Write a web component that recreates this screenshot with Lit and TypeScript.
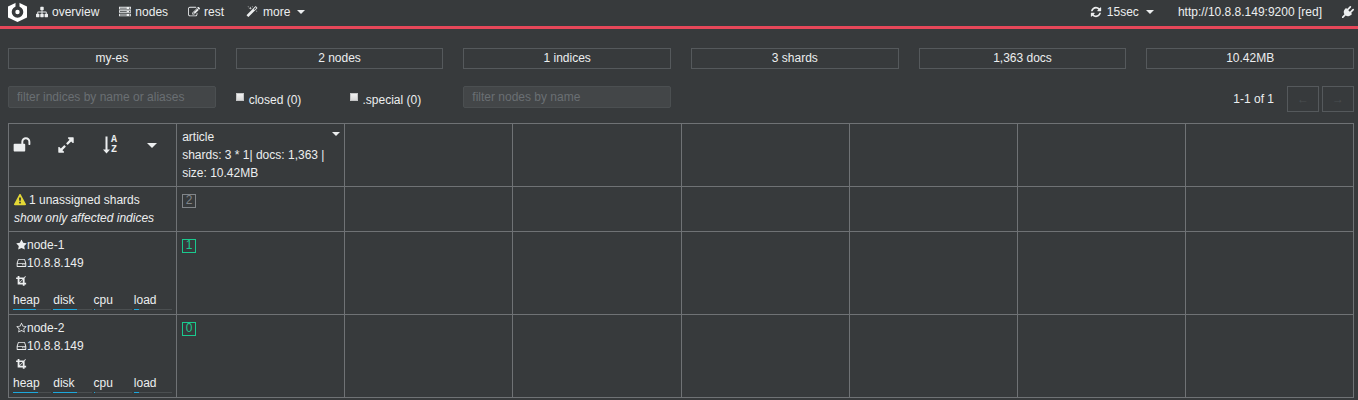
import { LitElement, html, css, svg } from "lit";
import { customElement, property, state } from "lit/decorators.js";

const GLYPHS: Record<string, string> = {
  sitemap:
    "M1792 1248v320q0 40-28 68t-68 28h-320q-40 0-68-28t-28-68v-320q0-40 28-68t68-28h96v-192h-512v192h96q40 0 68 28t28 68v320q0 40-28 68t-68 28h-320q-40 0-68-28t-28-68v-320q0-40 28-68t68-28h96v-192h-512v192h96q40 0 68 28t28 68v320q0 40-28 68t-68 28h-320q-40 0-68-28t-28-68v-320q0-40 28-68t68-28h96v-192q0-52 38-90t90-38h512v-192h-96q-40 0-68-28t-28-68v-320q0-40 28-68t68-28h320q40 0 68 28t28 68v320q0 40-28 68t-68 28h-96v192h512q52 0 90 38t38 90v192h96q40 0 68 28t28 68z",
  server:
    "M128 1408h1024v-128h-1024v128zm0-512h1024v-128h-1024v128zm1568 448q0-40-28-68t-68-28-68 28-28 68 28 68 68 28 68-28 28-68zm-1568-960h1024v-128h-1024v128zm1568 448q0-40-28-68t-68-28-68 28-28 68 28 68 68 28 68-28 28-68zm0-512q0-40-28-68t-68-28-68 28-28 68 28 68 68 28 68-28 28-68zm96 832v384h-1792v-384h1792zm0-512v384h-1792v-384h1792zm0-512v384h-1792v-384h1792z",
  edit:
    "M888 1184l116-116-152-152-116 116v56h96v96h56zm440-720q-16-16-33 1l-350 350q-17 17-1 33t33-1l350-350q17-17 1-33zm80 594v190q0 119-84.5 203.5t-203.5 84.5h-832q-119 0-203.5-84.5t-84.5-203.5v-832q0-119 84.5-203.5t203.5-84.5h832q63 0 117 25 15 7 18 23 3 17-9 29l-49 49q-14 14-32 8-23-6-45-6h-832q-66 0-113 47t-47 113v832q0 66 47 113t113 47h832q66 0 113-47t47-113v-126q0-13 9-22l64-64q15-15 35-7t20 29zm-96-738l288 288-672 672h-288v-288zm444 132l-92 92-288-288 92-92q28-28 68-28t68 28l152 152q28 28 28 68t-28 68z",
  magic:
    "M1254 581l293-293-107-107-293 293zm447-293q0 27-18 45l-1286 1286q-18 18-45 18t-45-18l-198-198q-18-18-18-45t18-45l1286-1286q18-18 45-18t45 18l198 198q18 18 18 45zm-1351-190l98 30-98 30-30 98-30-98-98-30 98-30 30-98zm350 162l196 60-196 60-60 196-60-196-196-60 196-60 60-196zm930 478l98 30-98 30-30 98-30-98-98-30 98-30 30-98zm-640-640l98 30-98 30-30 98-30-98-98-30 98-30 30-98z",
  refresh:
    "M1639 1056q0 5-1 7-64 268-268 434.5t-478 166.5q-146 0-282.5-55t-243.5-157l-129 129q-19 19-45 19t-45-19-19-45v-448q0-26 19-45t45-19h448q26 0 45 19t19 45-19 45l-137 137q71 66 161 102t187 36q134 0 250-65t186-179q11-17 53-117 8-23 30-23h192q13 0 22.5 9.5t9.5 22.5zm25-800v448q0 26-19 45t-45 19h-448q-26 0-45-19t-19-45 19-45l138-138q-148-137-349-137-134 0-250 65t-186 179q-11 17-53 117-8 23-30 23h-199q-13 0-22.5-9.5t-9.5-22.5v-7q65-268 270-434.5t480-166.5q146 0 284 55.5t245 156.5l130-129q19-19 45-19t45 19 19 45z",
  plug:
    "M1755 453q37 38 37 90.5t-37 90.5l-401 400 150 150-160 160q-163 163-389.5 186.5t-411.5-100.5l-362 362h-181v-181l362-362q-124-185-100.5-411.5t186.5-389.5l160-160 150 150 400-401q38-37 91-37t90 37 37 90.5-37 90.5l-400 401 234 234 401-400q38-37 91-37t90 37z",
  expand:
    "M883 1056q0 13-10 23l-332 332 144 144q19 19 19 45t-19 45-45 19h-448q-26 0-45-19t-19-45v-448q0-26 19-45t45-19 45 19l144 144 332-332q10-10 23-10t23 10l114 114q10 10 10 23zm781-864v448q0 26-19 45t-45 19-45-19l-144-144-332 332q-10 10-23 10t-23-10l-114-114q-10-10-10-23t10-23l332-332-144-144q-19-19-19-45t19-45 45-19h448q26 0 45 19t19 45z",
  unlock:
    "M1728 576v256q0 26-19 45t-45 19h-64q-26 0-45-19t-19-45v-256q0-106-75-181t-181-75-181 75-75 181v192h96q40 0 68 28t28 68v576q0 40-28 68t-68 28h-960q-40 0-68-28t-28-68v-576q0-40 28-68t68-28h672v-192q0-185 131.5-316.5t316.5-131.5 316.5 131.5 131.5 316.5z",
  star:
    "M1728 647q0 22-26 48l-363 354 86 500q1 7 1 20 0 21-10.5 35.5t-30.5 14.5q-19 0-40-12l-449-236-449 236q-22 12-40 12-21 0-31.5-14.5t-10.5-35.5q0-6 2-20l86-500-364-354q-25-27-25-48 0-37 56-46l502-73 225-455q19-41 49-41t49 41l225 455 502 73q56 9 56 46z",
  starOutline:
    "M1201 1004l306-297-422-62-189-382-189 382-422 62 306 297-73 421 378-199 377 199zm527-357q0 22-26 48l-363 354 86 500q1 7 1 20 0 50-41 50-19 0-40-12l-449-236-449 236q-22 12-40 12-21 0-31.5-14.5t-10.5-35.5q0-6 2-20l86-500-364-354q-25-27-25-48 0-37 56-46l502-73 225-455q19-41 49-41t49 41l225 455 502 73q56 9 56 46z",
  disk:
    "M420 230h940q84 0 112 84l190 596q8 24 8 64v460q0 96-96 96h-1368q-96 0-96-96v-460q0-40 8-64l190-596q28-84 112-84zm20 150l-160 496h1220l-160-496zm-170 640v360h1240v-360zm740 90h150v170h-150zm240 0h150v170h-150z",
  crop:
    "M270 80h290v230h740l210-210 100 100-210 210v760h250v280h-250v240h-290v-240h-840v-860h-250v-280h250zm290 510v520l520-520zm550 110l-480 480h480z",
  warning:
    "M1024 1375v-190q0-14-9.5-23.5t-22.5-9.5h-192q-13 0-22.5 9.5t-9.5 23.5v190q0 14 9.5 23.5t22.5 9.5h192q13 0 22.5-9.5t9.5-23.5zm-2-374l18-459q0-12-10-19-13-11-24-11h-220q-11 0-24 11-10 7-10 21l17 457q0 10 10 16.5t24 6.5h185q14 0 23.5-6.5t10.5-16.5zm-14-934l768 1408q35 63-2 126-17 29-46.5 46t-63.5 17h-1536q-34 0-63.5-17t-46.5-46q-37-63-2-126l768-1408q17-31 47-49t65-18 65 18 47 49z",
};

@customElement("fa-icon")
export class FaIcon extends LitElement {
  @property() name = "";

  static styles = css`
    :host {
      display: inline-flex;
      flex: none;
      width: 12px;
      height: 12px;
    }
    .glyph {
      width: 100%;
      height: 100%;
      fill: currentColor;
      overflow: visible;
    }
  `;

  render() {
    return html`<svg class="glyph" viewBox="0 0 1792 1792" aria-hidden="true">
      ${svg`<path fill-rule="evenodd" d=${GLYPHS[this.name] ?? ""}></path>`}
    </svg>`;
  }
}

interface ClusterNode {
  name: string;
  host: string;
  master: boolean;
  shard: number;
  usage: { label: string; percent: number }[];
}

const NODES: ClusterNode[] = [
  {
    name: "node-1",
    host: "10.8.8.149",
    master: true,
    shard: 1,
    usage: [
      { label: "heap", percent: 60 },
      { label: "disk", percent: 63 },
      { label: "cpu", percent: 5 },
      { label: "load", percent: 13 },
    ],
  },
  {
    name: "node-2",
    host: "10.8.8.149",
    master: false,
    shard: 0,
    usage: [
      { label: "heap", percent: 66 },
      { label: "disk", percent: 63 },
      { label: "cpu", percent: 5 },
      { label: "load", percent: 13 },
    ],
  },
];

const STATS = ["my-es", "2 nodes", "1 indices", "3 shards", "1,363 docs", "10.42MB"];
const SPARE_COLUMNS = [0, 1, 2, 3, 4, 5];

@customElement("app-root")
export class AppRoot extends LitElement {
  @state() private closed = false;
  @state() private special = false;

  static styles = css`
    :host {
      display: block;
      box-sizing: border-box;
      min-height: 100vh;
      background: #373a3c;
      color: #eceeef;
      font: 12px/18px "Liberation Sans", Arial, sans-serif;
    }
    *,
    *::before {
      box-sizing: border-box;
    }
    button {
      display: inline-flex;
      align-items: center;
      margin: 0;
      padding: 0;
      border: 0;
      background: none;
      color: inherit;
      font: inherit;
      cursor: pointer;
    }
    a {
      color: inherit;
      text-decoration: none;
    }
    .navbar {
      display: flex;
      align-items: center;
      justify-content: space-between;
      height: 29px;
      padding: 0 4px 2px 8px;
      border-bottom: 3px solid #e64759;
    }
    .group {
      display: flex;
      align-items: center;
      gap: 20px;
    }
    .brand {
      display: flex;
      margin-right: -11px;
    }
    .logo {
      width: 19px;
      height: 20px;
    }
    .link {
      display: flex;
      align-items: center;
      gap: 4px;
    }
    .link.wide {
      gap: 5px;
      padding: 0 4px 0 2px;
    }
    .caret {
      flex: none;
      width: 0;
      height: 0;
      border: 4px solid transparent;
      border-top-color: currentColor;
      border-bottom: 0;
    }
    .caret.large {
      margin-left: 2px;
      border-width: 5px;
      border-bottom: 0;
    }
    .caret.spaced {
      margin-left: 2px;
    }
    .page {
      padding: 19px 4px 0 8px;
    }
    .stats {
      display: grid;
      grid-template-columns: repeat(6, 1fr);
      gap: 20px;
    }
    .stat {
      height: 21px;
      border: 1px solid #55595c;
      text-align: center;
    }
    .filters {
      display: grid;
      grid-template-columns: repeat(12, 1fr);
      column-gap: 20px;
      align-items: start;
      margin: 17px 0 11px;
    }
    .filter {
      grid-column: span 2;
      width: 100%;
      height: 22px;
      padding: 0 8px;
      border: 1px solid #4b4f51;
      border-radius: 2px;
      background: #434648;
      color: inherit;
      font: inherit;
      outline: 0;
    }
    .filter::placeholder {
      color: #6a6f73;
      opacity: 1;
    }
    .toggle {
      display: flex;
      gap: 5px;
      padding-top: 5px;
      white-space: nowrap;
    }
    .tick {
      appearance: none;
      flex: none;
      width: 8px;
      height: 8px;
      margin: 2px 0 0;
      border: 1px solid #c4c5c6;
      background: linear-gradient(#f2f2f2, #d8d8d8);
    }
    .tick:checked {
      background: #1ac98e;
    }
    .pager {
      grid-column: 7 / -1;
      display: flex;
      align-items: center;
      justify-content: flex-end;
      gap: 3px;
    }
    .range {
      margin-right: 10px;
    }
    .step {
      justify-content: center;
      width: 32px;
      height: 26px;
      border: 1px solid #55595c;
      color: #4a4e51;
      cursor: default;
    }
    .shards {
      width: 100%;
      border-collapse: collapse;
      table-layout: fixed;
    }
    .cell {
      padding: 4px;
      border: 1px solid #6f7275;
      text-align: left;
      vertical-align: top;
      font-weight: normal;
    }
    .tools {
      display: flex;
      align-items: center;
      gap: 26px;
      height: 34px;
    }
    .tool {
      width: 18px;
      height: 18px;
    }
    .tool fa-icon {
      width: 18px;
      height: 18px;
    }
    .sort {
      gap: 1px;
      padding-left: 2px;
    }
    .arrow {
      flex: none;
      width: 7px;
      height: 18px;
      fill: currentColor;
    }
    .letters {
      display: grid;
      font: bold 10px/10px "Liberation Mono", monospace;
    }
    .index {
      display: flex;
      justify-content: space-between;
      padding-left: 1px;
    }
    .menu {
      align-self: flex-start;
      padding-top: 4px;
    }
    .note {
      padding-left: 1px;
    }
    .alert {
      display: flex;
      align-items: center;
      gap: 3px;
    }
    .alert fa-icon {
      color: #e4d836;
    }
    .shard {
      width: 14px;
      height: 14px;
      margin: 3px 1px 0;
      border: 1px solid #1ac98e;
      color: #1ac98e;
      line-height: 10px;
      text-align: center;
    }
    .shard.unassigned {
      border-color: #818589;
      color: #818589;
    }
    .line {
      display: flex;
      align-items: center;
      height: 18px;
      padding-left: 3px;
    }
    .line fa-icon {
      width: 11px;
    }
    .usage {
      display: grid;
      grid-template-columns: repeat(4, 1fr);
      gap: 2px;
      margin-top: 1px;
    }
    .track {
      height: 1px;
      background: #4b4f51;
    }
    .fill {
      height: 1px;
      background: #1ca8dd;
    }
  `;

  private renderNode(node: ClusterNode) {
    return html`<tr>
      <th class="cell" scope="row">
        <div class="line">
          <fa-icon name=${node.master ? "star" : "starOutline"}></fa-icon>${node.name}
        </div>
        <div class="line"><fa-icon name="disk"></fa-icon>${node.host}</div>
        <div class="line"><fa-icon name="crop"></fa-icon></div>
        <div class="usage">
          ${node.usage.map(
            (u) => html`<div>
              ${u.label}
              <div class="track"><div class="fill" style="width:${u.percent}%"></div></div>
            </div>`
          )}
        </div>
      </th>
      <td class="cell"><div class="shard">${node.shard}</div></td>
      ${SPARE_COLUMNS.map(() => html`<td class="cell"></td>`)}
    </tr>`;
  }

  render() {
    return html`
      <nav class="navbar">
        <div class="group">
          <a class="brand" href="#" aria-label="home">
            <svg class="logo" viewBox="0 0 19 20" aria-hidden="true">
              <path d="M9.5 0l9.5 4.5v11l-9.5 4.5-9.5-4.5v-11z" fill="#fff" />
              <circle cx="9.5" cy="10" r="4" fill="none" stroke="#373a3c" stroke-width="3.6" />
              <path d="M7.5 0h4v6h-4z" fill="#373a3c" />
            </svg>
          </a>
          <a class="link" href="#overview"><fa-icon name="sitemap"></fa-icon>overview</a>
          <a class="link" href="#nodes"><fa-icon name="server"></fa-icon>nodes</a>
          <a class="link" href="#rest"><fa-icon name="edit"></fa-icon>rest</a>
          <button class="link wide">
            <fa-icon name="magic"></fa-icon>more<span class="caret spaced"></span>
          </button>
        </div>
        <div class="group">
          <button class="link wide">
            <fa-icon name="refresh"></fa-icon>15sec<span class="caret spaced"></span>
          </button>
          <a href="#connect">http://10.8.8.149:9200 [red]</a>
          <a class="link" href="#disconnect" aria-label="disconnect"><fa-icon name="plug"></fa-icon></a>
        </div>
      </nav>
      <main class="page">
        <div class="stats">${STATS.map((s) => html`<div class="stat">${s}</div>`)}</div>
        <div class="filters">
          <input class="filter" aria-label="filter indices" placeholder="filter indices by name or aliases" />
          <label class="toggle">
            <input
              class="tick"
              type="checkbox"
              .checked=${this.closed}
              @change=${() => (this.closed = !this.closed)}
            />closed (0)
          </label>
          <label class="toggle">
            <input
              class="tick"
              type="checkbox"
              .checked=${this.special}
              @change=${() => (this.special = !this.special)}
            />.special (0)
          </label>
          <input class="filter" aria-label="filter nodes" placeholder="filter nodes by name" />
          <div class="pager">
            <span class="range">1-1 of 1</span>
            <button class="step" disabled aria-label="previous">←</button>
            <button class="step" disabled aria-label="next">→</button>
          </div>
        </div>
        <table class="shards">
          <tbody>
            <tr>
              <th class="cell">
                <div class="tools">
                  <button class="tool" aria-label="unlock"><fa-icon name="unlock"></fa-icon></button>
                  <button class="tool" aria-label="expand"><fa-icon name="expand"></fa-icon></button>
                  <button class="tool sort" aria-label="sort by name">
                    <svg class="arrow" viewBox="0 0 7 18" aria-hidden="true">
                      <path d="M2.5 0.5h2v13h2.5l-3.5 4-3.5-4h2.5z" />
                    </svg>
                    <span class="letters"><span>A</span><span>Z</span></span>
                  </button>
                  <button class="tool" aria-label="more actions"><span class="caret large"></span></button>
                </div>
              </th>
              <th class="cell" scope="col">
                <div class="index">
                  <div>article<br />shards: 3 * 1| docs: 1,363 |<br />size: 10.42MB</div>
                  <button class="menu" aria-label="index actions"><span class="caret"></span></button>
                </div>
              </th>
              ${SPARE_COLUMNS.map(() => html`<td class="cell"></td>`)}
            </tr>
            <tr>
              <th class="cell" scope="row">
                <div class="note alert"><fa-icon name="warning"></fa-icon>1 unassigned shards</div>
                <div class="note"><a href="#affected"><i>show only affected indices</i></a></div>
              </th>
              <td class="cell"><div class="shard unassigned">2</div></td>
              ${SPARE_COLUMNS.map(() => html`<td class="cell"></td>`)}
            </tr>
            ${NODES.map((n) => this.renderNode(n))}
          </tbody>
        </table>
      </main>
    `;
  }
}
